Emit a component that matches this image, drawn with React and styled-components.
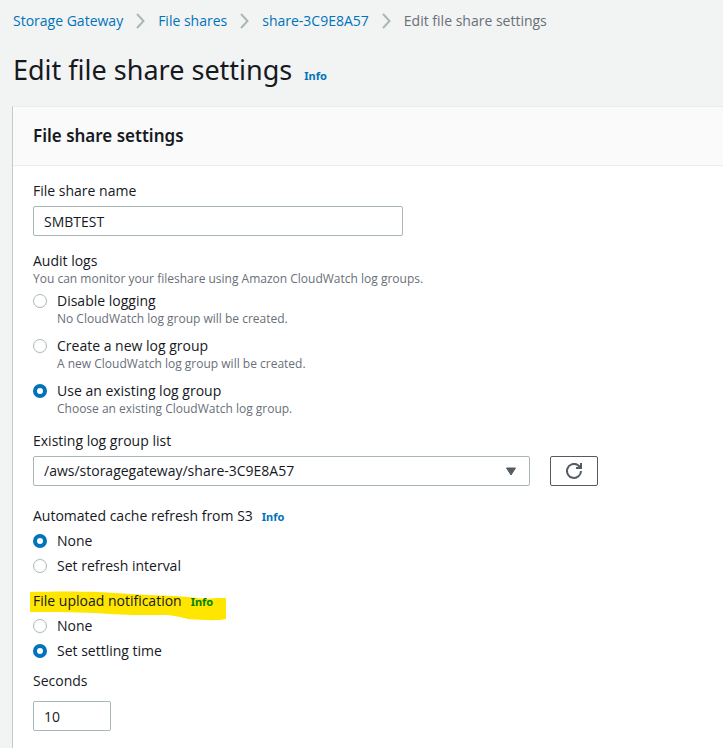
import React, { useState } from "react";
import styled, { createGlobalStyle } from "styled-components";

const GlobalStyle = createGlobalStyle`
  *, *::before, *::after { box-sizing: border-box; }
  body {
    margin: 0;
    background: #f2f3f3;
    color: #16191f;
    font-family: "Open Sans", "Noto Sans", sans-serif;
    font-size: 14px;
    line-height: 20px;
  }
  input, select, button { font: inherit; color: inherit; }
`;

const Page = styled.div`
  display: flex;
  flex-direction: column;
  min-height: 100vh;
  padding-left: 12px;
`;

const BreadcrumbList = styled.ol`
  display: flex;
  flex-wrap: wrap;
  align-items: center;
  gap: 13px;
  margin: 0;
  padding: 11px 1px 0;
  list-style: none;
  color: #687078;
`;

const BreadcrumbItem = styled.li`
  display: flex;
  align-items: center;
  gap: 13px;
`;

const Link = styled.a`
  color: #0073bb;
  text-decoration: none;
  &:hover { text-decoration: underline; }
`;

const InfoLink = styled(Link)`
  color: ${(p) => (p.$marked ? "#008000" : "#0073bb")};
  font-family: "Noto Sans", sans-serif;
  font-size: 11px;
  font-weight: 700;
  line-height: 14px;
`;

const TitleRow = styled.div`
  display: flex;
  align-items: baseline;
  gap: 12px;
  padding: 21px 1px 18px;
`;

const Title = styled.h1`
  margin: 0;
  font-family: "Noto Sans", sans-serif;
  font-size: 27px;
  font-weight: 400;
  line-height: 36px;
`;

const Panel = styled.section`
  flex: 1;
  background: #fff;
  border-top: 1px solid #eaeded;
  border-left: 1px solid #c4cacc;
`;

const PanelHeader = styled.header`
  padding: 17px 20px;
  background: #fafafa;
  border-bottom: 1px solid #eaeded;
`;

const PanelTitle = styled.h2`
  margin: 0;
  font-family: "Noto Sans", sans-serif;
  font-size: 17px;
  font-weight: 600;
  line-height: 24px;
`;

const Form = styled.form`
  display: flex;
  flex-direction: column;
  gap: 15px;
  padding: 15px 20px;
`;

const Field = styled.div`
  display: flex;
  flex-direction: column;
  gap: ${(p) => p.$gap || 5}px;
  padding-bottom: ${(p) => p.$after || 0}px;
`;

const Label = styled.label`
  align-self: flex-start;
`;

const FieldSet = styled.fieldset`
  min-width: 0;
  margin: 0;
  padding: 0;
  border: 0;
`;

const Legend = styled.legend`
  position: relative;
  isolation: isolate;
  display: flex;
  align-items: baseline;
  gap: 9px;
  padding: 0;
`;

const Description = styled.p`
  margin: 0;
  font-size: 12px;
  line-height: 15px;
  color: #687078;
`;

const Options = styled.div`
  display: flex;
  flex-direction: column;
  gap: ${(p) => p.$gap || 5}px;
  padding-top: 5px;
`;

const Option = styled.div`
  display: grid;
  grid-template-columns: 14px 1fr;
  column-gap: 10px;
  align-items: center;
  ${Description} { grid-column: 2; }
`;

const OptionLabel = styled.label`
  justify-self: start;
`;

const Radio = styled.input`
  appearance: none;
  width: 14px;
  height: 14px;
  margin: 0;
  border: 1px solid #aab7b8;
  border-radius: 50%;
  background: #fff;
  &:checked { border: 4px solid #0073bb; }
`;

const TextInput = styled.input`
  width: 100%;
  max-width: ${(p) => p.$max}px;
  height: 30px;
  padding: 0 10px;
  border: 1px solid #aab7b8;
  border-radius: 2px;
  background: #fff;
`;

const SelectRow = styled.div`
  display: flex;
  gap: 20px;
`;

const SelectBox = styled.div`
  position: relative;
  flex: 0 1 497px;
  min-width: 0;
`;

const Select = styled.select`
  display: block;
  appearance: none;
  width: 100%;
  height: 30px;
  padding: 0 40px 0 10px;
  border: 1px solid #aab7b8;
  border-radius: 2px;
  background: #fff;
`;

const Caret = styled.svg`
  position: absolute;
  top: 11px;
  right: 13px;
  pointer-events: none;
`;

const IconButton = styled.button`
  display: flex;
  align-items: center;
  justify-content: center;
  width: 48px;
  height: 30px;
  padding: 0;
  border: 1px solid #545b64;
  border-radius: 2px;
  background: #fff;
`;

const Marker = styled.svg`
  position: absolute;
  z-index: -1;
  top: 0;
  left: -3px;
  pointer-events: none;
`;

function Chevron() {
  return (
    <svg width="9" height="16" viewBox="0 0 9 16" fill="none" aria-hidden="true">
      <path d="M1 1l6.5 7L1 15" stroke="#aab7b8" strokeWidth="2" />
    </svg>
  );
}

function RefreshIcon() {
  return (
    <svg width="16" height="16" viewBox="0 0 16 16" fill="none" stroke="#545b64" strokeWidth="2" aria-hidden="true">
      <path d="M15 8A7 7 0 1 1 11.5 1.9Q13 2.8 14 4.5" />
      <path d="M15 0v5H10" />
      <path d="M11.5 4.5L14.5 1.5V4.5Z" fill="#545b64" stroke="none" />
    </svg>
  );
}

function RadioOption({ name, id, label, description, value, onChange }) {
  return (
    <Option>
      <Radio
        type="radio"
        id={id}
        name={name}
        checked={value === id}
        onChange={() => onChange(id)}
        aria-describedby={description ? `${id}-desc` : undefined}
      />
      <OptionLabel htmlFor={id}>{label}</OptionLabel>
      {description && <Description id={`${id}-desc`}>{description}</Description>}
    </Option>
  );
}

const crumbs = ["Storage Gateway", "File shares", "share-3C9E8A57"];

const auditOptions = [
  ["audit-off", "Disable logging", "No CloudWatch log group will be created."],
  ["audit-new", "Create a new log group", "A new CloudWatch log group will be created."],
  ["audit-existing", "Use an existing log group", "Choose an existing CloudWatch log group."],
];

export default function App() {
  const [audit, setAudit] = useState("audit-existing");
  const [refresh, setRefresh] = useState("refresh-none");
  const [notify, setNotify] = useState("notify-time");

  return (
    <>
      <GlobalStyle />
      <Page>
        <nav aria-label="Breadcrumbs">
          <BreadcrumbList>
            {crumbs.map((text) => (
              <BreadcrumbItem key={text}>
                <Link href="#">{text}</Link>
                <Chevron />
              </BreadcrumbItem>
            ))}
            <BreadcrumbItem aria-current="page">Edit file share settings</BreadcrumbItem>
          </BreadcrumbList>
        </nav>
        <TitleRow>
          <Title>Edit file share settings</Title>
          <InfoLink href="#">Info</InfoLink>
        </TitleRow>
        <Panel>
          <PanelHeader>
            <PanelTitle>File share settings</PanelTitle>
          </PanelHeader>
          <Form onSubmit={(e) => e.preventDefault()}>
            <Field>
              <Label htmlFor="share-name">File share name</Label>
              <TextInput id="share-name" type="text" defaultValue="SMBTEST" $max={370} />
            </Field>

            <FieldSet>
              <Legend>Audit logs</Legend>
              <Description>You can monitor your fileshare using Amazon CloudWatch log groups.</Description>
              <Options $gap={10}>
                {auditOptions.map(([id, label, description]) => (
                  <RadioOption
                    key={id}
                    id={id}
                    name="audit"
                    label={label}
                    description={description}
                    value={audit}
                    onChange={setAudit}
                  />
                ))}
              </Options>
            </FieldSet>

            <Field $after={5}>
              <Label htmlFor="log-group">Existing log group list</Label>
              <SelectRow>
                <SelectBox>
                  <Select id="log-group">
                    <option>/aws/storagegateway/share-3C9E8A57</option>
                  </Select>
                  <Caret width="12" height="9" viewBox="0 0 12 9" aria-hidden="true">
                    <path d="M1.5 1h9L6 8z" fill="#545b64" stroke="#545b64" strokeLinejoin="round" />
                  </Caret>
                </SelectBox>
                <IconButton type="button" aria-label="Refresh log groups">
                  <RefreshIcon />
                </IconButton>
              </SelectRow>
            </Field>

            <FieldSet>
              <Legend>
                Automated cache refresh from S3 <InfoLink href="#">Info</InfoLink>
              </Legend>
              <Options>
                <RadioOption id="refresh-none" name="refresh" label="None" value={refresh} onChange={setRefresh} />
                <RadioOption
                  id="refresh-interval"
                  name="refresh"
                  label="Set refresh interval"
                  value={refresh}
                  onChange={setRefresh}
                />
              </Options>
            </FieldSet>

            <FieldSet>
              <Legend>
                File upload notification <InfoLink href="#" $marked>Info</InfoLink>
                <Marker width="196" height="30" viewBox="0 0 196 30" aria-hidden="true">
                  <path
                    d="M0 1C30 0 70 0 100 3C125 5 140 4 158 6C172 8 180 8 186 7L196 7V28C188 30 172 29 158 28C150 26 146 25 138 24C110 24 92 24 80 23C50 21 25 21 0 21Z"
                    fill="#ffe600"
                  />
                </Marker>
              </Legend>
              <Options>
                <RadioOption id="notify-none" name="notify" label="None" value={notify} onChange={setNotify} />
                <RadioOption id="notify-time" name="notify" label="Set settling time" value={notify} onChange={setNotify} />
                <Field $gap={10}>
                  <Options>
                    <Label htmlFor="seconds">Seconds</Label>
                  </Options>
                  <TextInput id="seconds" type="text" inputMode="numeric" defaultValue="10" $max={78} />
                </Field>
              </Options>
            </FieldSet>
          </Form>
        </Panel>
      </Page>
    </>
  );
}
